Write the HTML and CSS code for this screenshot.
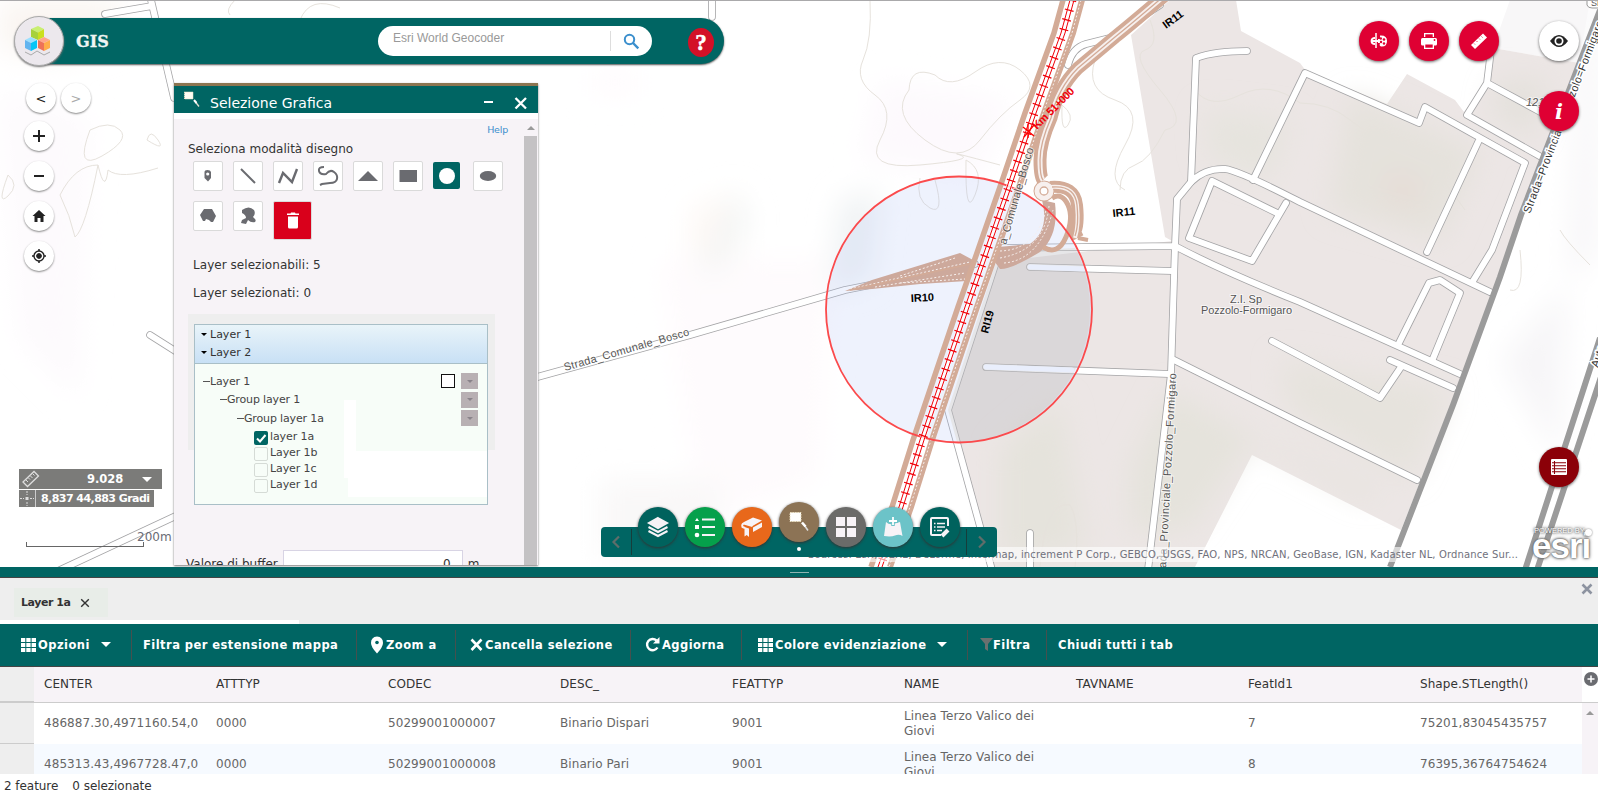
FILE: index.html
```html
<!DOCTYPE html>
<html lang="it">
<head>
<meta charset="utf-8">
<title>GIS</title>
<link rel="stylesheet" href="styles.css">
</head>
<body>
<div class="app">
<main class="map">
<svg class="basemap" width="1598" height="567" viewBox="0 0 1598 567">
  <defs>
    <filter id="soft" x="-50%" y="-50%" width="200%" height="200%"><feGaussianBlur stdDeviation="14"/></filter>
    <path id="rail" d="M1072 0 1063 33 1034 113 1009 187 987 250 967 307 945 372 922 440 901 507 880 567"/>
    <g id="roads">
      <path d="M105 14 152 6M151 0 174 98M60 570 180 514M712 -5V17M150 335 180 354"/>
      <path d="M530 379 690 335 845 290 975 264M1068 65Q1072 48 1086 44L1110 38 1160 5"/>
      <path d="M996 262 948 410 992 570"/>
      <path d="M1247 51Q1215 51 1196 58L1191 182Q1205 168 1225 169Q1240 171 1300 202L1490 292"/>
      <path d="M1191 182 1177 199 1175 246 1171 374 1148 570M1000 248 1175 246Q1220 270 1300 302L1460 374"/>
      <path d="M1277 213 1212 181 1189 238 1252 261 1286 203"/>
      <path d="M1253 180 1305 73 1419 123 1425 107 1525 163 1492 250 1473 281M1480 138 1427 252"/>
      <path d="M1491 50 1487 83 1467 115 1543 158M1487 83 1546 115"/>
      <path d="M1399 343 1429 283 1440 280 1460 293 1432 361"/>
      <path d="M1030 267 1172 271M986 367 1169 374M1174 360 1300 423 1417 480"/>
      <path d="M1272 341 1380 398 1401 367M1390 360 1453 388M1030 533V570"/>
    </g>
  </defs>
  <rect width="1598" height="567" fill="#fff"/>
  <g filter="url(#soft)">
    <path d="M0 0H120V40L60 60 0 50Z" fill="#faf5f1"/>
    <path d="M0 90 90 120 80 400 20 340Z" fill="#fdfafd"/>
    <path d="M690 210 740 190V300H690Z" fill="#fdf8f5"/>
    <path d="M590 70H640V95H590ZM660 260H830L820 480 700 520Z" fill="#fefbfd"/>
    <path d="M735 190 750 220 720 270 700 275Z" fill="#f3f5f4"/>
    <path d="M840 200 880 190 870 280 830 290Z" fill="#f0f3f4"/>
    <path d="M1500 360 1598 250V0H1580L1560 460Z" fill="#f7f6f8"/>
    <path d="M880 80 1010 100 980 180 860 160Z" fill="#fdf9fd"/>
    <path d="M600 480H720V560H600Z" fill="#f9f8f8"/>
  </g>
  <path d="M1510 0H1590L1579 63 1493 48Z" fill="#f8f7f8"/>
  <path d="M1170 0H1236L1241 31 1300 63 1306 71 1387 104 1407 74 1455 100 1464 112 1490 78 1493 48 1579 63 1500 280 1401 530 1252 455 1195 567H990L950 410 996 262 1172 241 1165 237 1131 35Z" fill="#ece6e5"/>
  <g filter="url(#soft)">
    <path d="M1350 95 1480 150 1440 240 1330 210Z" fill="#e5e2dc"/>
    <path d="M1205 110 1290 120 1270 180 1210 160Z" fill="#e6e4de"/>
    <path d="M1000 450 1060 400 1085 550 1000 560Z" fill="#e5e3dc"/>
    <path d="M1130 470 1170 390 1240 430 1380 490 1370 500 1250 440 1190 530H1130Z" fill="#e5e3dc"/>
    <path d="M1280 360 1450 390 1410 480 1290 410Z" fill="#e6e3dd"/>
    <path d="M1500 80H1550L1530 140 1490 110Z" fill="#e4e1dc"/>
    <path d="M1390 170 1420 180 1415 210 1385 200Z" fill="#e6dcd6"/>
  </g>
  <g class="contours">
    <path d="M870 0Q872 40 863 60T875 95T880 140T920 165T960 155T1000 165M909 90Q910 65 935 75Q950 90 975 72T1020 70T1020 100T980 140T925 140T909 90"/>
    <path d="M235 0Q225 10 230 15M300 20Q310 -5 340 8M90 130Q110 120 120 130T102 156T90 130M147 140Q150 128 158 140T147 140M8 175Q20 185 8 196T8 175M98 165Q75 165 60 195Q70 215 75 237Q85 230 98 165Q105 195 108 170Q120 180 158 168"/>
    <path d="M1300 103Q1330 103 1350 120T1410 148Q1430 160 1465 210M1195 90Q1210 110 1240 95T1300 103M1150 20Q1160 45 1145 50T1160 90T1165 130Q1150 160 1135 165T1120 190M1095 60Q1085 90 1115 100T1125 145T1125 190"/>
    <path d="M1040 567Q1045 500 1070 505Q1080 520 1075 567M1560 230Q1565 240 1590 265M1520 250Q1525 295 1510 290M920 178Q915 200 930 208T935 180M1062 105Q1075 115 1068 125T1062 105M966 160Q985 170 975 195T966 160"/>
  </g>
  <use href="#roads" class="casing"/>
  <use href="#roads" class="road"/>
  <path class="highway" d="M1600 10 1521 215 1500 277 1453 405 1390 567"/>
  <path class="highway" d="M1600 338 1525 570M1606 362 1537 570"/>
  <circle cx="959" cy="309.500" r="133" fill="#aabef5" fill-opacity=".2"/>
  <path d="M996 262 948 410 957 442A133 133 0 0 0 1075 248L1000 252Z" fill="#d0c4ac" fill-opacity=".25"/>
  <path d="M1030 267 1084 269M986 367 1072 370" stroke="#e9eefc" stroke-width="5" stroke-linecap="round"/>
  <g class="brown">
    <path d="M845 291 872 280 960 253 973 260 967 281 920 284 872 289Z" class="fill"/>
    <path d="M998 247 1030 244Q1050 230 1042 200L1055 203Q1059 235 1040 252Q1010 270 1000 269L992 258Z" class="fill"/>
    <path stroke-width="13" d="M1164 -4Q1130 25 1115 37L1078 68Q1058 88 1051 118Q1040 143 1040 160T1043 180"/>
    <circle cx="1044" cy="191" r="8" stroke-width="5"/>
    <path stroke-width="12" d="M1050 187Q1075 185 1077 205T1075 232L1078 238"/>
    <path stroke-width="4" d="M1078 238 1088 240"/>
    <path stroke-width="5" d="M1052 198Q1062 192 1068 205T1066 237T1043 247"/>
    <use href="#rail" x="-9" stroke-width="5.500"/>
    <use href="#rail" x="10" stroke-width="6"/>
  </g>
  <g class="brown-detail">
    <path stroke-width="5" d="M1164 -4Q1130 25 1115 37L1078 68Q1058 88 1051 118Q1040 143 1040 160T1043 180"/>
    <path stroke-width="4" d="M1050 187Q1075 185 1077 205T1075 238"/>
    <circle cx="1044" cy="191" r="7" stroke-width="5"/>
    <path d="M850 289 970 262M875 287 965 273M900 276 955 258M900 283 965 279" stroke-dasharray="2 2"/>
    <path d="M1000 258Q1045 250 1049 206M1004 263Q1040 260 1053 210M1000 251Q1036 250 1046 210" stroke-dasharray="2 2"/>
    <use href="#rail" x="9" stroke-dasharray="2 2"/>
  </g>
  <path class="brown-line" d="M1164 -4Q1130 25 1115 37L1078 68Q1058 88 1051 118Q1040 143 1040 160T1043 180M1052 187Q1075 185 1077 205T1075 236M850 290 970 264"/>
  <circle cx="1044" cy="191" r="4" class="brown-line"/>
  <circle cx="959" cy="309.500" r="133" class="selection"/>
  <use href="#rail" class="rail-white"/>
  <use href="#rail" class="rail-line" x="-2"/>
  <use href="#rail" class="rail-line" x="2"/>
  <use href="#rail" class="rail-tie"/>
  <path d="M1023 127 1034 136M1034 125 1024 137M1028 124V138" stroke="#f00" stroke-width="1.300"/>
  <g class="street">
    <text transform="translate(565 371) rotate(-16)" textLength="130">Strada_Comunale_Bosco</text>
    <text transform="translate(1006 245) rotate(-74)" textLength="100">a_Comunale_Bosco</text>
    <text transform="translate(1166 568) rotate(-87)" textLength="195">ada_Provinciale_Pozzolo_Formigaro</text>
    <text transform="translate(1230 303)" textLength="32">Z.I. Sp</text>
    <text transform="translate(1201 314)" textLength="91">Pozzolo-Formigaro</text>
    <text class="dark" transform="translate(1530 214) rotate(-69)" textLength="205">Strada=Provinciale=Pozzolo=Formigaro</text>
    <text class="dark" transform="translate(1598 368) rotate(-72)">Auto</text>
    <text class="elev" x="1526" y="106">121</text>
  </g>
  <g class="tag">
    <text transform="translate(1166 29) rotate(-36)">IR11</text>
    <text transform="translate(1113 217) rotate(-6)">IR11</text>
    <text transform="translate(911 302) rotate(-3)">IR10</text>
    <text transform="translate(988 334) rotate(-75)">RI19</text>
    <text class="km" transform="translate(1037 130) rotate(-45)" textLength="54">Km 51+000</text>
  </g>
  <path d="M1587 0V5Q1588 8 1592 8H1600V0" fill="#fff" stroke="#999"/>
  <text x="1591" y="6" font-family="Liberation Sans" font-size="9" fill="#555">SP</text>
  <path d="M0 .5H1598" stroke="#aaa9ab"/>
</svg>

<header class="topbar">
  <div class="topbar-strip">
    <h1>GIS</h1>
    <div class="search"><span>Esri World Geocoder</span><i></i>
      <svg width="17" height="17" viewBox="0 0 17 17" fill="none" stroke="#3b8fcd"><circle cx="6.500" cy="6.500" r="4.700" stroke-width="2"/><path d="M10 10 15.300 15.300" stroke-width="2.400"/></svg>
    </div>
    <button class="help-badge">?</button>
  </div>
  <div class="logo"><svg width="30" height="34" viewBox="0 0 30 34">
    <path d="M14 2 20 5 14 8.500 7 5Z" fill="#c9ef72"/><path d="M7 5 14 8.500V16L7 13Z" fill="#a7d13c"/><path d="M14 8.500 20 5V13L14 16Z" fill="#cbe01e"/>
    <path d="M7 13 13 16 7 19 1 16Z" fill="#9be0ff"/><path d="M1 16 7 19V27L1 24Z" fill="#62b4ef"/><path d="M7 19 13 16V24L7 27Z" fill="#06c5f6"/>
    <path d="M20 13 26 16 20 19 14 16Z" fill="#ffa68a"/><path d="M14 16 20 19V27L14 24Z" fill="#ee7358"/><path d="M20 19 26 16V24L20 27Z" fill="#ffad4a"/>
    <path d="M1 28 7 31 13 27 20 31 26 28" fill="none" stroke="#aaa"/></svg></div>
</header>

<nav class="mapnav">
  <div class="history"><button>&lt;</button><button class="off">&gt;</button></div>
  <button><svg width="14" height="14"><path d="M7 1V13M1 7H13" stroke="#222" stroke-width="2"/></svg></button>
  <button><svg width="14" height="14"><path d="M2 7H12" stroke="#222" stroke-width="2"/></svg></button>
  <button><svg width="14" height="14"><path d="M7 1 13.500 7H11.500V13H8.500V9H5.500V13H2.500V7H.5Z" fill="#222"/></svg></button>
  <button><svg width="16" height="16" fill="none" stroke="#222"><circle cx="8" cy="8" r="5" stroke-width="1.400"/><circle cx="8" cy="8" r="2.400" fill="#222"/><path d="M8 1V3M8 13V15M1 8H3M13 8H15" stroke-width="1.500"/></svg></button>
</nav>

<div class="tools">
  <button><svg width="18" height="18"><path d="M10 3.500Q17 3 17 9T11 14.500Q9 14 10 11H8V7H10Z" fill="#fff"/><path d="M6 1V16" stroke="#fff" stroke-width="1.500"/><path d="M5 6Q1.500 6 1.500 9T5 12M1 9H8" fill="none" stroke="#fff" stroke-width="1.800"/><g fill="#df0033"><circle cx="10.800" cy="6.500" r="1.200"/><circle cx="14" cy="7.500" r="1.300"/><circle cx="11" cy="10" r="1.200"/><circle cx="14" cy="11.500" r="1.200"/></g></svg></button>
  <button><svg width="18" height="18"><path d="M4 1H14V5H4Z" fill="#fff"/><path d="M5.300 2.300H12.700V5H5.300Z" fill="#df0033"/><rect x="1" y="6" width="16" height="7.500" rx="1.500" fill="#fff"/><path d="M4 10H14V17H4Z" fill="#fff"/><path d="M5.300 12.500H12.700V15.700H5.300Z" fill="#df0033"/><circle cx="14.500" cy="8" r=".9" fill="#df0033"/></svg></button>
  <button><svg width="18" height="18"><path d="M1 13 13 1.500 17 5.500 5 17Z" fill="#fff"/><path d="M4 11.500 5 12.500M6.500 9 7.500 10M9 6.500 10 7.500M11.500 4.500 12.500 5.500" stroke="#df0033" stroke-width=".8"/></svg></button>
</div>
<div class="side">
  <button class="white"><svg width="20" height="14"><path d="M1 7Q10 -5 19 7Q10 19 1 7Z" fill="#222"/><circle cx="10" cy="7" r="4.500" fill="#fff"/><circle cx="10" cy="7" r="2.800" fill="#222"/></svg></button>
  <button class="info">i</button>
  <button class="list"><svg width="16" height="16"><rect width="16" height="16" rx="1" fill="#fff"/><path d="M1 3.800H15M1 6.800H15M1 9.800H15M1 12.800H15M3.500 2V15" stroke="#8b0008" stroke-width="1.100"/></svg></button>
</div>

<div class="readout">
  <div class="ruler"><svg width="18" height="18" fill="none" stroke="#ddd"><path d="M1 12 12 1.500 16.500 6 5.500 16.500Z" stroke-width="1.300"/><path d="M4 10 6 12M6.500 8 8 9.500M8.500 6 10.500 8M11 4 12.500 5.500"/></svg><b>9.028</b><i class="caret"></i></div>
  <div class="coords"><svg width="16" height="17"><path d="M8 1V5M8 12V16M1 8.500H5M11 8.500H15" stroke="#ddd" stroke-dasharray="2 1"/><rect x="6.500" y="7" width="3" height="3" fill="#ddd"/></svg><b>8,837 44,883 Gradi</b></div>
</div>
<div class="scale"><i></i><span>200m</span></div>

<section class="panel">
  <div class="panel-head">
    <svg width="18" height="18"><rect x="1.500" y="2" width="8.500" height="7" fill="#fffdf3" stroke="#eadfc0" stroke-dasharray="1 1"/><path d="M12.500 12 16 16.500" stroke="#e3dccf" stroke-width="1.300"/><path d="M11 10 13.500 13" stroke="#fff" stroke-width="2"/></svg>
    <h2>Selezione Grafica</h2>
    <i class="minimize"></i>
    <svg width="14" height="14"><path d="M1.500 2 12 12.500M12 2 1.500 12.500" stroke="#fff" stroke-width="2.300"/></svg>
  </div>
  <div class="panel-body">
    <div class="panel-content">
      <a class="help">Help</a>
      <p class="label first">Seleziona modalità disegno</p>
      <div class="draw">
        <button><svg width="28" height="28"><path d="M10.500 10Q10.500 8 13.500 8T17 10V16L14 19.500 10.500 16Z" fill="#6a6b70"/><circle cx="13.700" cy="12" r="1.600" fill="#fff"/></svg></button>
        <button><svg width="28" height="28"><path d="M7 7 21 21" stroke="#6a6b70" stroke-width="2"/></svg></button>
        <button><svg width="28" height="28"><path d="M5 21 9 11 18 20 23 7" fill="none" stroke="#6a6b70" stroke-width="2.400"/></svg></button>
        <button><svg width="28" height="28"><path d="M10 5Q4 5 5 9T12 12Q16 7 20 10T23 17Q22 21 16 21L8 22 6 23" fill="none" stroke="#6a6b70" stroke-width="2"/></svg></button>
        <button><svg width="28" height="28"><path d="M4 19 14 9 24 19Z" fill="#6a6b70"/></svg></button>
        <button><svg width="28" height="28"><rect x="5.500" y="8" width="17.500" height="12" fill="#6a6b70"/></svg></button>
        <button class="on"><i></i></button>
        <button><svg width="28" height="28"><ellipse cx="14" cy="14" rx="8.200" ry="5" fill="#6a6b70"/></svg></button>
        <button><svg width="28" height="28"><path d="M6 13 10 7H18L22 14 19 20H17L15 18 12 17 11 19H9Z" fill="#6a6b70"/></svg></button>
        <button><svg width="28" height="28"><path d="M8 8Q15 3 20 8Q22 12 19 15Q23 18 21 20Q17 21 14 18L12 22 7 21 8 18 12 16Q12 13 8 11Z" fill="#6a6b70"/></svg></button>
        <button class="trash"><svg width="14" height="17"><path d="M1 1.500H4.500L5 .5H9L9.500 1.500H13V3H1ZM2 4.500H12V15Q12 16.500 10.500 16.500H3.500Q2 16.500 2 15Z" fill="#fff"/></svg></button>
      </div>
      <p class="label count">Layer selezionabili: 5</p>
      <p class="label count two">Layer selezionati: 0</p>
      <div class="layers-wrap">
        <div class="layers">
          <div class="layers-head"><span><i class="caret"></i>Layer 1</span><span><i class="caret"></i>Layer 2</span></div>
          <div class="tree">
            <div class="node"><i class="dash"></i>Layer 1<em></em><b><i class="caret"></i></b></div>
            <div class="node n2"><i class="dash"></i>Group layer 1<b><i class="caret"></i></b></div>
            <div class="node n3"><i class="dash"></i>Group layer 1a<b><i class="caret"></i></b></div>
            <label class="leaf"><i class="checked"><svg width="14" height="14"><path d="M3 7.500 6 10.500 11.500 4" fill="none" stroke="#fff" stroke-width="2"/></svg></i>layer 1a</label>
            <label class="leaf"><i></i>Layer 1b</label>
            <label class="leaf"><i></i>Layer 1c</label>
            <label class="leaf"><i></i>Layer 1d</label>
          </div>
        </div>
      </div>
      <div class="buffer"><span>Valore di buffer</span><div class="field">0</div><span>m</span></div>
    </div>
    <div class="scrollbar"><i class="up"></i><div></div></div>
  </div>
</section>

<div class="attribution">Sources: Esri, HERE, DeLorme, Intermap, increment P Corp., GEBCO, USGS, FAO, NPS, NRCAN, GeoBase, IGN, Kadaster NL, Ordnance Sur...</div>
<div class="esri"><small>POWERED BY</small><strong>esri</strong><i></i></div>

<nav class="dock">
  <div class="arrow"><svg width="10" height="14"><path d="M8 1.500 2.500 7 8 12.500" fill="none" stroke="#5f6d6a" stroke-width="2.200"/></svg></div>
  <div class="dock-items">
    <button class="c1"><svg width="24" height="24" fill="none" stroke="#f7f3f7" stroke-width="2"><path d="M12 3 21 8 12 13 3 8Z" fill="#f7f3f7"/><path d="M2.500 12 12 17 21.500 12M2.500 16 12 21 21.500 16"/></svg></button>
    <button class="c2"><svg width="24" height="24"><path d="M9 4.500H22M9 12H22M9 20H22" stroke="#f7f3f7" stroke-width="1.800"/><path d="M2 6 4 3 6 6Z" fill="#fff"/><rect x="2" y="10" width="4" height="4" fill="#fff"/><circle cx="4" cy="20" r="2.300" fill="#fff"/></svg></button>
    <button class="c3"><svg width="24" height="24"><path d="M3 7.500 13 2.500 22 5.500 12.500 11Z" fill="#f7f3f7"/><path d="M13 12.500 22 7.500V12L13 17Z" fill="#f7f3f7"/><path d="M12.500 11 4 8.500Q1.500 9 2.500 12L5 13" fill="none" stroke="#f7f3f7" stroke-width="2"/><path d="M4.500 12 9 13.500V22L6.700 20 4.500 21.500Z" fill="#f7f3f7"/></svg></button>
    <button class="c4"><svg width="24" height="24"><rect x="3" y="2.500" width="11" height="9" fill="#fff" stroke="#eadfc0" stroke-dasharray="1.500 1"/><path d="M17.500 15.500 21 20.500" stroke="#ddd" stroke-width="1.600"/><path d="M15 12.500 18.500 16.500" stroke="#fff" stroke-width="2.600"/></svg></button>
    <button class="c5"><svg width="24" height="24"><path d="M2 2H11V11H2ZM13 2H22V11H13ZM2 13H11V22H2ZM13 13H22V22H13Z" fill="#f7f3f7"/></svg></button>
    <button class="c6"><svg width="24" height="24"><path d="M5 7Q8 10 12 9T19 7L21.500 21Q18 19 14 20.500T3 21Z" fill="#f7f3f7"/><path d="M12 1V11M7 6H17" stroke="#6cc3c8" stroke-width="3.500"/><path d="M12 2V10M8 6H16" stroke="#fff" stroke-width="1.800"/></svg></button>
    <button class="c1"><svg width="24" height="24" fill="none" stroke="#f7f3f7"><path d="M20 11V4Q20 3 19 3H4Q3 3 3 4V19Q3 20 4 20H13" stroke-width="2"/><path d="M6 8.500H7.500M9 8.500H17M6 12H7.500M9 12H17M6 15.500H7.500M9 15.500H14" stroke-width="1.600"/><path d="M14 21 20 15" stroke-width="4"/></svg></button>
  </div>
  <div class="arrow"><svg width="10" height="14"><path d="M2 1.500 7.500 7 2 12.500" fill="none" stroke="#5f6d6a" stroke-width="2.200"/></svg></div>
  <i class="dot"></i>
</nav>
</main>

<div class="splitter"><i></i></div>
<section class="attributes">
  <div class="tabs"><div class="tab">Layer 1a<svg width="10" height="10"><path d="M1.200 1.200 8.800 8.800M8.800 1.200 1.200 8.800" stroke="#333" stroke-width="1.400"/></svg></div>
    <svg class="close" width="12" height="12"><path d="M1.500 1.500 10.500 10.500M10.500 1.500 1.500 10.500" stroke="#8d93a0" stroke-width="2.600"/></svg></div>
  <div class="toolbar">
    <div class="w1"><svg width="15" height="14"><use href="#grid"/></svg>Opzioni<i class="caret"></i></div>
    <div class="w2">Filtra per estensione mappa</div>
    <div class="w3"><svg width="14" height="18"><path d="M7 .5Q1 1 1 7Q1 11 7 17.500Q13 11 13 7Q13 1 7 .5Z" fill="#fff"/><circle cx="7" cy="6.500" r="1.800" fill="#006563"/></svg>Zoom a</div>
    <div class="w4"><svg width="13" height="13"><path d="M1.500 1.500 11.500 12M11.500 1.500 1.500 12" stroke="#fff" stroke-width="2.600"/></svg>Cancella selezione</div>
    <div class="w5"><svg width="15" height="15"><path d="M12.500 10.500A5.600 5.600 0 1 1 11.500 3.500" fill="none" stroke="#fff" stroke-width="2.400"/><path d="M8 6.500H14.500V0Z" fill="#fff"/></svg>Aggiorna</div>
    <div class="w6"><svg width="15" height="14"><g id="grid" fill="#fff"><path d="M0 0H4.300V4H0ZM5.300 0H9.600V4H5.300ZM10.600 0H15V4H10.600ZM0 5H4.300V9H0ZM5.300 5H9.600V9H5.300ZM10.600 5H15V9H10.600ZM0 10H4.300V14H0ZM5.300 10H9.600V14H5.300ZM10.600 10H15V14H10.600Z"/></g></svg>Colore evidenziazione<i class="caret"></i></div>
    <div class="w7"><svg width="13" height="13"><path d="M0 0H13L8 6V13L5 11V6Z" fill="#69706f"/></svg>Filtra</div>
    <div class="w8">Chiudi tutti i tab</div>
  </div>
  <div class="grid">
    <div class="row head"><i></i><span>CENTER</span><span>ATTTYP</span><span>CODEC</span><span>DESC_</span><span>FEATTYP</span><span>NAME</span><span>TAVNAME</span><span>FeatId1</span><span>Shape.STLength()</span><b><svg width="14" height="14"><circle cx="7" cy="7" r="7" fill="#6a6b70"/><path d="M7 3.500V10.500M3.500 7H10.500" stroke="#fff" stroke-width="1.500"/></svg></b></div>
    <div class="row"><i></i><span>486887.30,4971160.54,0</span><span>0000</span><span>50299001000007</span><span>Binario Dispari</span><span>9001</span><span>Linea Terzo Valico dei Giovi</span><span></span><span>7</span><span>75201,83045435757</span><b><i class="up"></i></b></div>
    <div class="row alt"><i></i><span>485313.43,4967728.47,0</span><span>0000</span><span>50299001000008</span><span>Binario Pari</span><span>9001</span><span>Linea Terzo Valico dei Giovi</span><span></span><span>8</span><span>76395,36764754624</span><b></b></div>
  </div>
  <footer><span>2 feature</span><span>0 selezionate</span></footer>
</section>
</div>
</body>
</html>
```
FILE: styles.css
```css
* { box-sizing: border-box; }
body { margin: 0; font-family: "DejaVu Sans", Verdana, sans-serif; font-size: 12px; color: #333; }
h1, h2, p { margin: 0; }
button { border: 0; padding: 0; display: flex; align-items: center; justify-content: center; font-family: inherit; }
svg { display: block; flex: none; }
i { font-style: normal; }
.app { width: 1598px; height: 793px; display: flex; flex-direction: column; overflow: hidden; background: #fff; }
.caret { display: block; width: 0; height: 0; border: 5px solid transparent; border-top-color: #fff; border-bottom: 0; }

/* map */
.map { position: relative; height: 567px; flex: none; overflow: hidden; }
.contours path { fill: none; stroke: #e6e2dc; }
.casing, .road { fill: none; stroke-linejoin: round; stroke-linecap: round; }
.casing { stroke: #a4a4a6; stroke-width: 7.6; }
.road { stroke: #fff; stroke-width: 6; }
.highway { fill: none; stroke: #9b9b9b; stroke-width: 6; }
.brown { fill: none; stroke: #d3ab97; }
.brown .fill { fill: #cda99c; stroke: none; }
.brown-detail { fill: none; stroke: #f7f0ee; stroke-width: 1; }
.brown-line { fill: none; stroke: #d3ab97; stroke-width: 1.3; }
.selection { fill: none; stroke: #fb4a4c; stroke-width: 1.8; }
.rail-white, .rail-line, .rail-tie { fill: none; }
.rail-white { stroke: #fff; stroke-width: 6; opacity: .8; }
.rail-line { stroke: #f00008; stroke-width: 1; }
.rail-tie { stroke: #f00008; stroke-width: 9; stroke-dasharray: 1.2 8.8; }
.street { font-family: "Liberation Sans", sans-serif; font-size: 11px; fill: #555; stroke: #fff; stroke-width: 2px; stroke-opacity: .6; paint-order: stroke; }
.street .dark { fill: #333; stroke-width: 3px; stroke-opacity: 1; }
.street .elev { font-style: italic; }
.tag { font-family: "Liberation Sans", sans-serif; font-size: 11px; font-weight: bold; fill: #000; }
.tag .km { fill: #f00008; }

/* top bar */
.topbar { position: absolute; left: 14px; top: 16px; }
.topbar-strip { margin: 2px 0 0 25px; width: 685px; height: 46px; padding-left: 37px; border-radius: 0 23px 23px 0; background: #006563; box-shadow: 0 1px 2px #555; display: flex; align-items: center; }
.topbar h1 { width: 302px; font: bold 16px "DejaVu Serif", serif; color: #f0f5f4; -webkit-text-stroke: .3px #f0f5f4; }
.search { width: 274px; height: 30px; border-radius: 15px; background: #fff; padding: 0 12px 0 15px; display: flex; align-items: center; }
.search span { flex: 1; font: 12px "Liberation Sans", sans-serif; color: #999; margin-top: -7px; }
.search i { width: 1px; height: 20px; background: #ddd; margin-right: 12px; }
.help-badge { width: 26px; height: 29px; border-radius: 50%; background: #d31027; color: #fff; font: bold 23px "Liberation Serif", serif; margin: 3px 0 0 36px; -webkit-text-stroke: .5px #fff; }
.logo { position: absolute; left: 0; top: 0; width: 50px; height: 50px; border-radius: 50%; background: #ece8ed; border: 1px solid #aaa; box-shadow: 0 1px 2px #777; display: flex; justify-content: center; align-items: center; }

/* round buttons */
.mapnav { position: absolute; left: 24px; top: 83px; display: flex; flex-direction: column; gap: 10px; }
.mapnav button { width: 30px; height: 30px; border-radius: 50%; background: #fff; box-shadow: 0 1px 2px #888; font-size: 13px; color: #222; }
.history { display: flex; gap: 5px; margin: 0 0 -2px 2px; }
.mapnav .off { color: #aaa; }
.tools { position: absolute; left: 1359px; top: 21px; display: flex; gap: 10px; }
.tools button, .side button { width: 40px; height: 40px; border-radius: 50%; background: #df0033; box-shadow: 0 1px 3px #666; }
.side { position: absolute; left: 1539px; top: 21px; display: flex; flex-direction: column; gap: 30px; }
.side .white { background: #fff; }
.side .info { color: #fff; font: italic bold 21px "DejaVu Serif", serif; }
.side .list { background: #8b0008; margin-top: 286px; }

/* map read-outs */
.readout { position: absolute; left: 19px; top: 469px; color: #fff; display: flex; flex-direction: column; align-items: flex-start; gap: 1px; }
.ruler { width: 143px; height: 20px; background: #7b7b79; display: flex; align-items: center; padding-left: 3px; }
.ruler b { margin-left: 47px; width: 55px; font-size: 11.5px; }
.coords { height: 17px; width: 135px; background: #7b7b79; display: flex; align-items: center; white-space: nowrap; }
.coords b { border-left: 1px solid #ccc; padding-left: 5px; font-size: 11px; letter-spacing: -.55px; line-height: 17px; }
.scale { position: absolute; left: 26px; top: 530px; display: flex; align-items: flex-start; color: #6a6b75; }
.scale i { width: 118px; height: 5px; border: 1px solid #666; border-top: 0; margin: 12px -7px 0 0; }
.scale span { font-size: 12px; line-height: 15px; }

/* drawing panel */
.panel { position: absolute; left: 174px; top: 83px; width: 364px; height: 482px; background: #fff; box-shadow: 0 1px 2px #777; overflow: hidden; }
.panel-head { height: 30px; border-top: 3px solid #8c7551; background: #006563; display: flex; align-items: center; padding: 2px 10px 0 9px; margin-bottom: 6px; }
.panel-head > svg:first-child { margin-top: -4px; }
.panel-head h2 { font-size: 14px; font-weight: normal; color: #fff; margin: 4px 0 0 9px; }
.minimize { width: 9px; height: 2px; background: #fff; margin: 3px 21px 0 auto; }
.panel-head > svg:last-child { margin-top: 4px; }
.panel-body { height: 446px; background: #f7f3f7; display: flex; }
.panel-content { width: 350px; position: relative; }
.help { position: absolute; right: 16px; top: 4px; color: #3b8fcd; font-size: 9.5px; line-height: 14px; letter-spacing: -.2px; }
.label { line-height: 18px; white-space: nowrap; }
.first { padding: 21px 0 0 14px; }
.draw { display: flex; flex-wrap: wrap; align-content: flex-start; gap: 10px; width: 330px; padding: 3px 0 0 19px; align-items: flex-start; height: 88px; }
.draw button { width: 30px; height: 30px; background: #fff; border: 1px solid #dadada; border-radius: 2px; flex: none; }
.draw .on { width: 27px; height: 27px; margin: 1px 3px 0 0; background: #006563; border: 0; }
.draw .on i { width: 16px; height: 16px; border-radius: 50%; background: #fff; }
.draw .trash { width: 39px; height: 39px; background: #d9001b; }
.count { padding: 10px 0 0 19px; letter-spacing: .05px; }
.layers-wrap { margin: 12px 0 0 14px; width: 307px; height: 136px; padding: 10px 7px 0 6px; background: #eee; }
.layers { width: 294px; height: 181px; border: 1px solid #a9bfc7; background: linear-gradient(#fff, #fff) 149px 75px/12px 78px no-repeat, linear-gradient(#fff, #fff) 153px 126px/139px 46px no-repeat #f7fdf8; font-size: 11px; }
.layers-head { height: 39px; background: linear-gradient(#e9f4f9, #c8e0f5); border-bottom: 1px solid #a9bfc7; padding-top: 1px; }
.layers-head span { display: flex; align-items: center; gap: 3px; height: 17.500px; padding-left: 6px; }
.layers-head .caret { border-width: 3.500px 3.500px 0; border-top-color: #000; }
.tree { padding: 8px 9px 0 8px; }
.node { display: flex; align-items: center; height: 18.600px; white-space: nowrap; color: #444; letter-spacing: -.15px; }
.n2 { padding-left: 17px; }
.n3 { padding-left: 34px; }
.dash { width: 7px; height: 1px; background: #555; }
.node em { width: 14px; height: 14px; border: 1px solid #111; background: #fff; margin: 0 -38px 0 auto; }
.node b { width: 17px; height: 16px; background: #b8b0b3; margin-left: auto; display: flex; align-items: center; justify-content: center; }
.node em + b { margin-left: 44px; }
.node b .caret { border-width: 3px 3px 0; border-top-color: #89838a; }
.leaf { display: flex; align-items: center; height: 16px; padding-left: 51px; gap: 2px; color: #444; letter-spacing: -.1px; position: relative; top: 1px; }
.leaf i { width: 14px; height: 14px; border: 1px solid #d5dbd6; border-radius: 2px; margin-top: 2px; }
.leaf .checked { background: #006563; border: 0; }
.buffer { position: absolute; left: 12px; top: 431px; display: flex; align-items: center; height: 28px; gap: 5px; white-space: nowrap; }
.field { width: 180px; height: 28px; background: #fff; border: 1px solid #d8d4e4; text-align: right; padding: 6px 11px 0; }
.scrollbar { width: 13px; height: 446px; display: flex; flex-direction: column; align-items: center; }
.up { display: block; width: 0; height: 0; border: 4px solid transparent; border-bottom-color: #999; border-top: 0; }
.scrollbar .up { margin: 7px 0 6px; }
.scrollbar div { flex: 1; width: 13px; background: #c4c2c4; }

.attribution { position: absolute; left: 804px; top: 547px; width: 718px; height: 15px; padding-left: 4px; background: rgba(255,255,255,.6); font-size: 10px; letter-spacing: .13px; line-height: 15px; color: #70717c; white-space: nowrap; }
.esri { position: absolute; left: 1532px; top: 526px; width: 60px; height: 38px; color: #fff; font-family: "Liberation Sans", sans-serif; text-shadow: 0 0 2px #555, 0 0 3px #777, 0 0 4px #999; display: flex; flex-direction: column; }
.esri small { font-size: 7.5px; line-height: 9px; padding-left: 2px; white-space: nowrap; }
.esri strong { font-size: 35px; line-height: 22px; letter-spacing: -1px; }
.esri i { position: absolute; right: 0; top: 3px; width: 7px; height: 7px; border-radius: 50%; background: #fff; box-shadow: 0 0 2px #777; }

.dock { position: absolute; left: 601px; top: 527px; width: 396px; height: 30px; border-radius: 4px; background: #006563; display: flex; }
.arrow { width: 31px; border-right: 1px solid #163d3b; margin: 2px 0; display: flex; align-items: center; justify-content: center; }
.arrow:nth-child(3) { border: 0; border-left: 1px solid #163d3b; }
.dock-items { flex: 1; display: flex; gap: 7px; padding-left: 6px; margin-top: -20px; }
.dock-items button { width: 40px; height: 40px; border-radius: 50%; box-shadow: 0 1px 3px #333; flex: none; }
.dock-items .c1 { background: #00625d; }
.dock-items .c2 { background: #05a04b; }
.dock-items .c3 { background: #e8681b; }
.dock-items .c4 { background: #8c7355; margin-top: -5px; }
.dock-items .c5 { background: #6b6b69; }
.dock-items .c6 { background: #6cc3c8; }
.dot { position: absolute; left: 196px; top: 20px; width: 4px; height: 4px; border-radius: 50%; background: #fff; }

/* attribute table */
.splitter { height: 11px; flex: none; background: #006563; border-bottom: 1px solid #444; display: flex; justify-content: center; }
.splitter i { width: 19px; height: 1px; background: #8fb3b1; margin-top: 5px; }
.attributes { flex: 1; display: flex; flex-direction: column; min-height: 0; }
.tabs { height: 46px; flex: none; background: linear-gradient(#fff, #fff) 0 100%/299px 4px no-repeat #eee; display: flex; justify-content: space-between; padding: 10px 5px 0 14px; }
.tab { width: 94px; height: 29px; background: #e8ede8; display: flex; align-items: center; gap: 10px; padding-left: 7px; font-size: 11px; font-weight: bold; letter-spacing: -.45px; white-space: nowrap; }
.close { margin-top: -5px; }
.toolbar { height: 43px; flex: none; background: #006563; border-bottom: 1px solid #444; display: flex; align-items: center; font-weight: bold; font-size: 11.5px; letter-spacing: .45px; color: #fff; padding-bottom: 1px; }
.toolbar div { height: 30px; display: flex; align-items: center; gap: 2px; padding-left: 12px; border-right: 1px solid #45504e; white-space: nowrap; }
.toolbar .caret { margin-left: 9px; }
.toolbar .w1 { width: 132px; padding-left: 21px; }
.toolbar .w2 { width: 225px; padding-left: 11px; }
.toolbar .w3 { width: 99px; padding-left: 13px; }
.toolbar .w4 { width: 175px; padding-left: 14px; }
.toolbar .w5 { width: 111px; padding-left: 14px; }
.toolbar .w6 { width: 226px; padding-left: 16px; }
.toolbar .w7 { width: 79px; gap: 0; }
.toolbar .w8 { border: 0; padding-left: 11px; }
.grid { height: 107px; flex: none; overflow: hidden; }
.row { height: 41px; display: flex; color: #666; background: #fff; letter-spacing: .07px; }
.row > i { width: 34px; background: #eee; border-bottom: 1px solid #ccc; }
.row > span { width: 172px; padding: 0 10px; line-height: 15px; align-self: center; flex: none; }
.row > span:nth-child(7) { padding-right: 25px; }
.row > b { width: 16px; background: #f7f3f7; display: flex; justify-content: center; }
.row .up { margin-top: 8px; }
.head { height: 36px; background: #f7f3f7; color: #333; border-bottom: 1px solid #ccc; }
.head > b { background: #fff; padding: 5px 0 0 2px; }
.alt { background: #f6faff; }
footer { display: flex; gap: 14px; padding-left: 4px; line-height: 25px; color: #333; letter-spacing: -.05px; }
```
